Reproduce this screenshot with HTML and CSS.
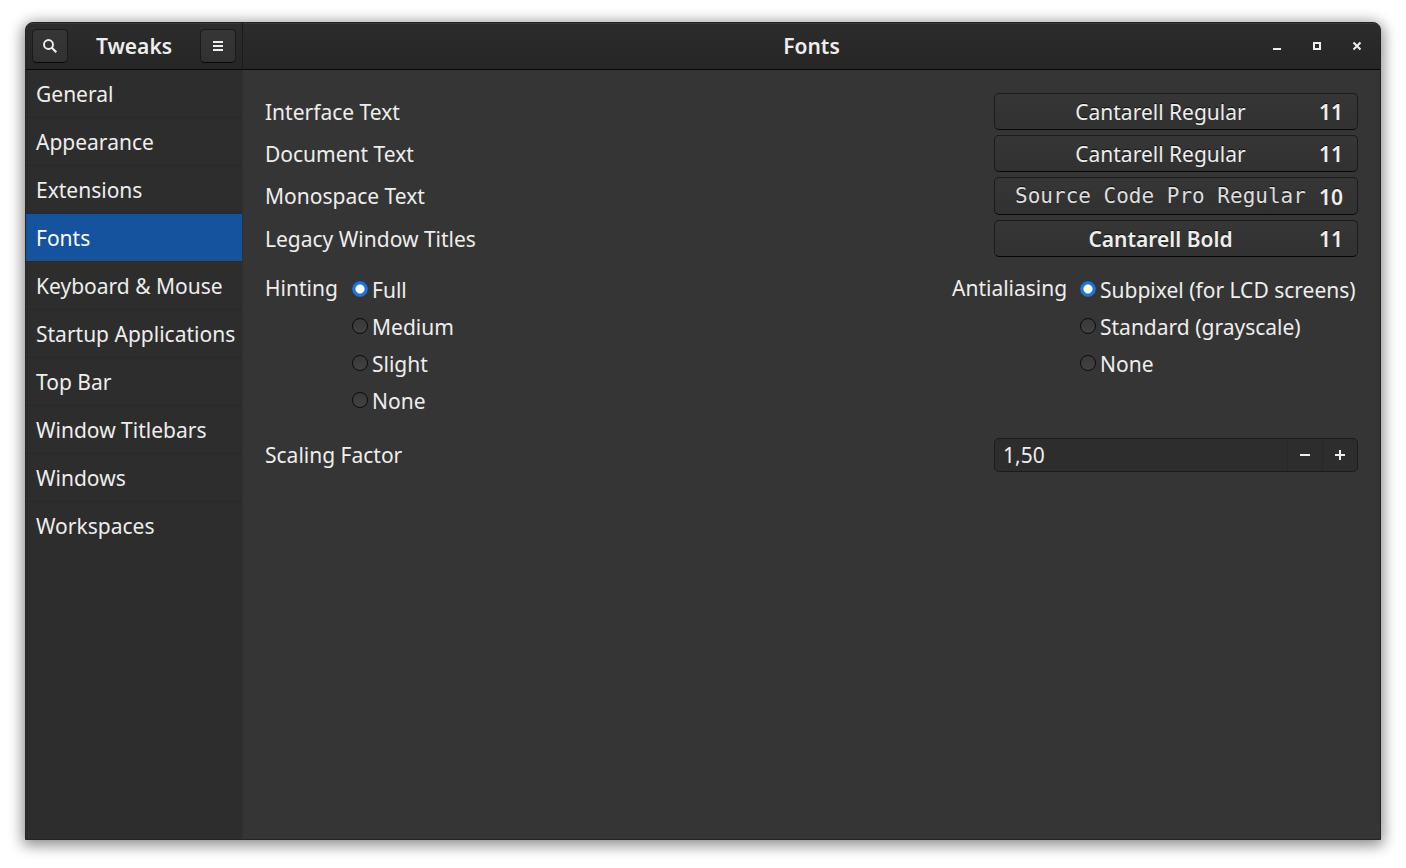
FILE: index.html
```html
<!DOCTYPE html>
<html lang="en">
<head>
<meta charset="utf-8">
<meta name="viewport" content="width=device-width, initial-scale=1">
<title>Tweaks</title>
<link rel="stylesheet" href="styles.css">
</head>
<body>
<div class="window">
  <div class="side">
    <header class="bar side-bar">
      <button class="tool" type="button" aria-label="Search">
        <svg width="16" height="16" viewBox="0 0 16 16"><circle cx="6.5" cy="6.5" r="4.5" fill="none" stroke="currentColor" stroke-width="1.9"/><path d="M9.6 9.6L14.3 14.3" stroke="currentColor" stroke-width="2.1"/></svg>
      </button>
      <h1 class="title">Tweaks</h1>
      <button class="tool" type="button" aria-label="Menu">
        <svg width="16" height="16" viewBox="0 0 16 16"><path d="M3 3h10v2H3zM3 7h10v2H3zM3 11h10v2H3z" fill="currentColor"/></svg>
      </button>
    </header>
    <nav class="nav">
      <a class="item" href="#general">General</a>
      <a class="item" href="#appearance">Appearance</a>
      <a class="item" href="#extensions">Extensions</a>
      <a class="item active" href="#fonts" aria-current="page">Fonts</a>
      <a class="item" href="#keyboard">Keyboard &amp; Mouse</a>
      <a class="item" href="#startup">Startup Applications</a>
      <a class="item" href="#topbar">Top Bar</a>
      <a class="item" href="#titlebars">Window Titlebars</a>
      <a class="item" href="#windows">Windows</a>
      <a class="item" href="#workspaces">Workspaces</a>
    </nav>
  </div>
  <div class="main">
    <header class="bar main-bar">
      <h2 class="title main-title">Fonts</h2>
      <div class="controls">
        <button class="control" type="button" aria-label="Minimize"><svg width="16" height="16" viewBox="0 0 16 16"><path d="M4 10h8v2H4z" fill="currentColor"/></svg></button>
        <button class="control" type="button" aria-label="Maximize"><svg width="16" height="16" viewBox="0 0 16 16"><path d="M5 5h6v6H5z" fill="none" stroke="currentColor" stroke-width="2"/></svg></button>
        <button class="control" type="button" aria-label="Close"><svg width="16" height="16" viewBox="0 0 16 16"><path d="M4.5 4.5l7 7M11.5 4.5l-7 7" stroke="currentColor" stroke-width="2"/></svg></button>
      </div>
    </header>
    <main class="content">
      <div class="fonts">
        <div class="row"><label for="f1">Interface Text</label><button class="font" id="f1" type="button"><span class="name">Cantarell Regular</span><span class="size">11</span></button></div>
        <div class="row"><label for="f2">Document Text</label><button class="font" id="f2" type="button"><span class="name">Cantarell Regular</span><span class="size">11</span></button></div>
        <div class="row"><label for="f3">Monospace Text</label><button class="font" id="f3" type="button"><span class="name mono">Source Code Pro Regular</span><span class="size">10</span></button></div>
        <div class="row"><label for="f4">Legacy Window Titles</label><button class="font" id="f4" type="button"><span class="name bold">Cantarell Bold</span><span class="size">11</span></button></div>
      </div>
      <div class="groups">
        <div class="group hinting" role="radiogroup" aria-labelledby="hint">
          <span class="group-label" id="hint">Hinting</span>
          <div class="options">
            <label class="option"><input type="radio" name="hinting" checked>Full</label>
            <label class="option"><input type="radio" name="hinting">Medium</label>
            <label class="option"><input type="radio" name="hinting">Slight</label>
            <label class="option"><input type="radio" name="hinting">None</label>
          </div>
        </div>
        <div class="group antialiasing" role="radiogroup" aria-labelledby="aa">
          <span class="group-label" id="aa">Antialiasing</span>
          <div class="options">
            <label class="option"><input type="radio" name="aa" checked>Subpixel (for LCD screens)</label>
            <label class="option"><input type="radio" name="aa">Standard (grayscale)</label>
            <label class="option"><input type="radio" name="aa">None</label>
          </div>
        </div>
      </div>
      <div class="row">
        <label for="scale">Scaling Factor</label>
        <div class="spin">
          <input class="value" id="scale" type="text" inputmode="decimal" value="1,50">
          <button class="step" type="button" aria-label="Decrease"><svg width="16" height="16" viewBox="0 0 16 16"><path d="M3 7h10v2H3z" fill="currentColor"/></svg></button>
          <button class="step" type="button" aria-label="Increase"><svg width="16" height="16" viewBox="0 0 16 16"><path d="M3 7h4V3h2v4h4v2H9v4H7V9H3z" fill="currentColor"/></svg></button>
        </div>
      </div>
    </main>
  </div>
</div>
</body>
</html>
```
FILE: styles.css
```css
* { box-sizing: border-box; }
body {
  margin: 0;
  padding: 22px 25px 28px;
  min-height: 100vh;
  display: flex;
  background: #fff;
  color: #eeeeec;
  font: 21px/28px "Noto Sans", sans-serif;
}
button, input { font: inherit; color: inherit; margin: 0; }
button { display: flex; align-items: center; justify-content: center; padding: 0; }
svg { display: block; }
.window {
  flex: 1;
  display: grid;
  grid-template-columns: 217px 1fr;
  border: 1px solid #242424;
  border-radius: 8px 8px 0 0;
  background: #353535;
  overflow: hidden;
  box-shadow: 0 3px 14px 2px rgba(0, 0, 0, .4), 0 3px 20px rgba(0, 0, 0, .12);
}
.side, .main { display: flex; flex-direction: column; min-width: 0; }
.side { background: #2d2d2d; border-right: 1px solid #303030; }
.bar {
  height: 47px;
  background: linear-gradient(#2c2c2c, #262626);
  border-bottom: 1px solid #070707;
  box-shadow: inset 0 1px #383838;
}
.side-bar { display: flex; align-items: center; justify-content: space-between; padding: 0 6px; border-right: 1px solid #1b1b1b; margin-right: -1px; }
.title { margin: 0; font-size: 21px; line-height: 28px; font-weight: 600; }
.tool {
  width: 36px;
  height: 34px;
  border: 1px solid #1b1b1b;
  border-bottom-color: #070707;
  border-radius: 5px;
  background: linear-gradient(#363636, #313131);
}
.main-bar { display: grid; grid-template-columns: 1fr auto 1fr; align-items: center; padding: 0 15px; }
.main-title { grid-column: 2; }
.controls { display: flex; gap: 24px; justify-content: flex-end; }
.control { width: 16px; height: 16px; border: 0; background: none; }
.nav { display: flex; flex-direction: column; }
.item { height: 48px; padding: 10px; line-height: 28px; color: inherit; text-decoration: none; white-space: nowrap; border-bottom: 1px solid #292929; }
.item:last-child { border-bottom: 0; }
.item.active { background: #15539e; background-clip: padding-box; color: #fff; }
.content { padding: 23px 22px; display: flex; flex-direction: column; gap: 16px; }
.fonts { display: grid; gap: 5px; }
.row { display: flex; align-items: center; justify-content: space-between; }
.font {
  width: 364px;
  gap: 7px;
  padding: 4px 14px 3px;
  border: 1px solid #1b1b1b;
  border-bottom-color: #070707;
  border-radius: 5px;
  background: linear-gradient(#363636, #313131);
  text-shadow: 0 -1px rgba(0, 0, 0, .7);
}
.name { flex: 1; text-align: center; white-space: nowrap; }
.size, .bold { font-weight: 600; }
.mono { font: 21px/29px "DejaVu Sans Mono", monospace; color: #dededc; }
.groups { display: flex; justify-content: space-between; }
.group { display: grid; }
.hinting { grid-template-columns: 87px auto; }
.antialiasing { grid-template-columns: 128px 278px; }
.group-label { line-height: 30px; }
.options { display: grid; align-content: start; gap: 5px; padding-top: 1px; }
.option { display: flex; align-items: center; gap: 4px; height: 32px; white-space: nowrap; }
.option input {
  appearance: none;
  width: 16px;
  height: 16px;
  margin-bottom: 2px;
  border: 1px solid #0c0c0c;
  border-radius: 50%;
  background: linear-gradient(#393939, #424242);
}
.option input:checked { border-color: #1b6acb; background: radial-gradient(circle, #fff 4px, #1f76e0 5px); }
.groups + .row { padding-top: 5px; }
.spin { display: flex; width: 364px; height: 34px; border: 1px solid #1b1b1b; border-radius: 5px; background: #2d2d2d; }
.value { flex: 1; min-width: 0; padding: 0 8px; border: 0; background: none; outline: 0; }
.step { width: 35px; border: 0; border-left: 1px solid #282828; background: none; }
```
